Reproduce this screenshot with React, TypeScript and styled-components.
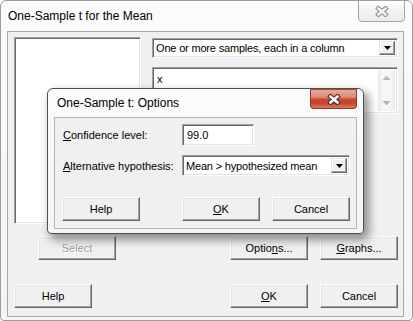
import React from "react";
import styled, { createGlobalStyle, css } from "styled-components";

const Global = createGlobalStyle`
  html, body { margin: 0; padding: 0; background: #ffffff; }
  body {
    font-family: "Liberation Sans", Arial, sans-serif;
    font-size: 11px;
    color: #000;
  }
`;

const UI_FONT = `"Liberation Sans", Arial, sans-serif`;

const Screen = styled.div`
  position: relative;
  width: 413px;
  height: 321px;
  overflow: hidden;
`;

const WindowFrame = styled.div<{ $active?: boolean }>`
  box-sizing: border-box;
  display: flex;
  flex-direction: column;
  background: linear-gradient(#fbfbfb, #f4f4f4);
  border: 1px solid ${(p) => (p.$active ? "#505050" : "#9c9c9c")};
  border-radius: 6px 6px 4px 4px;
`;

const MainWindow = styled(WindowFrame)`
  width: 413px;
  height: 321px;
  padding: 0 8px 3px 6px;
`;

const OptionsWindow = styled(WindowFrame)`
  position: absolute;
  left: 47px;
  top: 88px;
  width: 317px;
  height: 146px;
  padding: 0 6px 4px 6px;
  box-shadow: 4px 5px 10px 1px rgba(0, 0, 0, 0.42);
`;

const TitleBar = styled.div<{ $height: number }>`
  display: flex;
  justify-content: space-between;
  align-items: flex-start;
  height: ${(p) => p.$height}px;
  flex: none;
`;

const Title = styled.div<{ $top: number; $left: number }>`
  margin-top: ${(p) => p.$top}px;
  margin-left: ${(p) => p.$left}px;
  font-family: ${UI_FONT};
  font-size: 12px;
  line-height: 15px;
  color: #000;
  white-space: nowrap;
`;

const CloseButton = styled.div<{ $active?: boolean; $edge: number }>`
  box-sizing: border-box;
  width: 47px;
  height: 20px;
  margin-right: ${(p) => p.$edge}px;
  display: flex;
  align-items: center;
  justify-content: center;
  border-radius: 0 0 4px 4px;
  ${(p) =>
    p.$active
      ? css`
          border: 1px solid #8a3a2c;
          border-top-color: #a05040;
          background: linear-gradient(
            #e9a996 0%,
            #db8a74 40%,
            #c8472f 52%,
            #c9452c 75%,
            #dd7a5c 100%
          );
        `
      : css`
          margin-top: -1px;
          height: 22px;
          border: 1px solid #a4a4a4;
          background: linear-gradient(#ffffff, #f2f2f2 55%, #ebebeb);
        `}
`;

const CloseGlyph = ({ active }: { active?: boolean }) => (
  <svg width="14" height="11" viewBox="0 0 14 11">
    <path
      d="M3.5 2.5 L10.5 8.5 M10.5 2.5 L3.5 8.5"
      stroke={active ? "#3a2a28" : "#8a8a8a"}
      strokeWidth="4.6"
      strokeLinecap="square"
      fill="none"
    />
    <path
      d="M3.5 2.5 L10.5 8.5 M10.5 2.5 L3.5 8.5"
      stroke={active ? "#ffffff" : "#f4f4f4"}
      strokeWidth="2.6"
      strokeLinecap="square"
      fill="none"
    />
  </svg>
);

const Client = styled.div`
  box-sizing: border-box;
  flex: 1;
  display: flex;
  flex-direction: column;
  background: #f0f0f0;
  border: 1px solid #a9a9a9;
`;

const MainClient = styled(Client)`
  padding: 5px 5px 0 6px;
`;

const OptionsClient = styled(Client)`
  padding: 6px 6px 7px 7px;
  border-color: #b4b4b4;
`;

const sunken = css`
  box-sizing: border-box;
  background: #ffffff;
  border: 1px solid;
  border-color: #a0a0a0 #ffffff #ffffff #a0a0a0;
  box-shadow: inset 1px 1px 0 #696969, inset -1px -1px 0 #e3e3e3;
`;

const TopRow = styled.div`
  display: flex;
  align-items: flex-start;
  gap: 11px;
`;

const ListBox = styled.div`
  ${sunken};
  width: 127px;
  height: 187px;
`;

const RightColumn = styled.div`
  width: 246px;
  margin-top: 1px;
  display: flex;
  flex-direction: column;
  gap: 9px;
`;

const Combo = styled.div<{ $width: number; $height: number }>`
  ${sunken};
  width: ${(p) => p.$width}px;
  height: ${(p) => p.$height}px;
  display: flex;
  align-items: stretch;
  padding: 2px;
`;

const ComboText = styled.div`
  flex: 1;
  display: flex;
  align-items: center;
  padding-left: 1px;
  font-family: ${UI_FONT};
  font-size: 11px;
  letter-spacing: -0.18px;
  white-space: nowrap;
  overflow: hidden;
`;

const DropButton = styled.div`
  box-sizing: border-box;
  width: 16px;
  flex: none;
  display: flex;
  align-items: center;
  justify-content: center;
  background: #f0f0f0;
  border: 1px solid;
  border-color: #e3e3e3 #696969 #696969 #e3e3e3;
  box-shadow: inset -1px -1px 0 #a0a0a0, inset 1px 1px 0 #ffffff;
`;

const DownTriangle = () => (
  <svg width="7" height="4" viewBox="0 0 7 4">
    <polygon points="0,0 7,0 3.5,4" fill="#000" />
  </svg>
);

const VarBox = styled.div`
  ${sunken};
  height: 47px;
  display: flex;
  padding: 2px;
`;

const VarText = styled.div`
  flex: 1;
  padding: 3px 0 0 2px;
  font-family: ${UI_FONT};
  font-size: 11px;
  line-height: 13px;
`;

const ScrollBar = styled.div`
  width: 17px;
  flex: none;
  display: flex;
  flex-direction: column;
  justify-content: space-between;
  align-items: center;
  padding: 6px 0;
  box-sizing: border-box;
  background: linear-gradient(to right, #e9e9e9, #f6f6f6 30%, #f6f6f6 70%, #ececec);
`;

const ScrollArrow = ({ up }: { up?: boolean }) => (
  <svg width="7" height="4" viewBox="0 0 7 4">
    <polygon
      points={up ? "0,4 7,4 3.5,0" : "0,0 7,0 3.5,4"}
      fill="#b9b9b9"
      stroke="#a2a2a2"
      strokeWidth="0.5"
    />
  </svg>
);

const Button = styled.button`
  box-sizing: border-box;
  width: 78px;
  height: 24px;
  padding: 0;
  margin: 0;
  font-family: ${UI_FONT};
  font-size: 11px;
  color: #000;
  background: #f0f0f0;
  border: 1px solid;
  border-color: #ffffff #696969 #696969 #ffffff;
  box-shadow: inset -1px -1px 0 #a0a0a0, inset 1px 1px 0 #e3e3e3;
  &:disabled {
    color: #a0a0a0;
    text-shadow: 1px 1px 0 #ffffff;
  }
`;

const SelectButton = styled(Button)`
  margin-left: 24px;
`;

const Key = styled.span`
  text-decoration: underline;
`;

const ActionRow = styled.div<{ $gap: number }>`
  display: flex;
  justify-content: space-between;
  margin-top: ${(p) => p.$gap}px;
`;

const ButtonGroup = styled.div`
  display: flex;
  gap: 12px;
`;

const FormGrid = styled.div`
  display: grid;
  grid-template-columns: 120px auto;
  grid-auto-rows: auto;
  row-gap: 9px;
  align-items: center;
  justify-items: start;
`;

const Label = styled.div`
  padding-left: 1px;
  font-family: ${UI_FONT};
  font-size: 11px;
  white-space: nowrap;
`;

const TextField = styled.div`
  ${sunken};
  width: 72px;
  height: 22px;
  display: flex;
  align-items: center;
  padding: 0 4px;
  font-family: ${UI_FONT};
  font-size: 11px;
`;

export default function App() {
  return (
    <>
      <Global />
      <Screen>
        <MainWindow>
          <TitleBar $height={30}>
            <Title $top={8} $left={1}>One-Sample t for the Mean</Title>
            <CloseButton $edge={-1}>
              <CloseGlyph />
            </CloseButton>
          </TitleBar>
          <MainClient>
            <TopRow>
              <ListBox />
              <RightColumn>
                <Combo $width={246} $height={20}>
                  <ComboText>One or more samples, each in a column</ComboText>
                  <DropButton>
                    <DownTriangle />
                  </DropButton>
                </Combo>
                <VarBox>
                  <VarText>x</VarText>
                  <ScrollBar>
                    <ScrollArrow up />
                    <ScrollArrow />
                  </ScrollBar>
                </VarBox>
              </RightColumn>
            </TopRow>
            <ActionRow $gap={12}>
              <SelectButton disabled>Select</SelectButton>
              <ButtonGroup>
                <Button>
                  Optio<Key>n</Key>s...
                </Button>
                <Button>
                  <Key>G</Key>raphs...
                </Button>
              </ButtonGroup>
            </ActionRow>
            <ActionRow $gap={24}>
              <Button>Help</Button>
              <ButtonGroup>
                <Button>
                  <Key>O</Key>K
                </Button>
                <Button>Cancel</Button>
              </ButtonGroup>
            </ActionRow>
          </MainClient>
        </MainWindow>

        <OptionsWindow $active>
          <TitleBar $height={28}>
            <Title $top={7} $left={3}>One-Sample t: Options</Title>
            <CloseButton $active $edge={0}>
              <CloseGlyph active />
            </CloseButton>
          </TitleBar>
          <OptionsClient>
            <FormGrid>
              <Label>
                <Key>C</Key>onfidence level:
              </Label>
              <TextField>99.0</TextField>
              <Label>
                <Key>A</Key>lternative hypothesis:
              </Label>
              <Combo $width={168} $height={21}>
                <ComboText>Mean &gt; hypothesized mean</ComboText>
                <DropButton>
                  <DownTriangle />
                </DropButton>
              </Combo>
            </FormGrid>
            <ActionRow $gap={21}>
              <Button>Help</Button>
              <ButtonGroup>
                <Button>
                  <Key>O</Key>K
                </Button>
                <Button>Cancel</Button>
              </ButtonGroup>
            </ActionRow>
          </OptionsClient>
        </OptionsWindow>
      </Screen>
    </>
  );
}
